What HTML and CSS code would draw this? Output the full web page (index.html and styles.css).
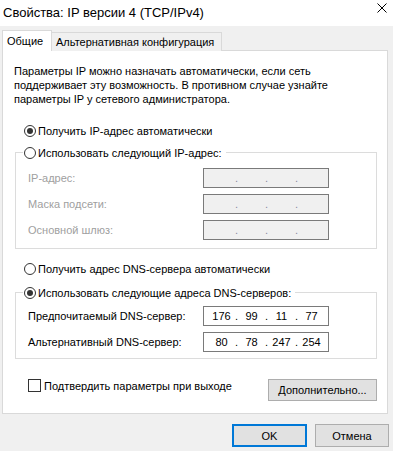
FILE: index.html
```html
<!DOCTYPE html>
<html lang="ru">
<head>
<meta charset="utf-8">
<title>Свойства: IP версии 4 (TCP/IPv4)</title>
<link rel="stylesheet" href="styles.css">
</head>
<body>
<div class="titlebar">
  <span class="title">Свойства: IP версии 4 (TCP/IPv4)</span>
  <svg class="close" width="10" height="10" viewBox="0 0 10 10"><path d="M0.5 0.5L9.5 9.5M9.5 0.5L0.5 9.5" stroke="#000" stroke-width="1"/></svg>
</div>
<div class="tabs">
  <div class="tab active">Общие</div>
  <div class="tab">Альтернативная конфигурация</div>
</div>
<div class="panel">
  <p class="intro">Параметры IP можно назначать автоматически, если сеть<br>поддерживает эту возможность. В противном случае узнайте<br>параметры IP у сетевого администратора.</p>

  <div class="opt r-auto"><span class="radio checked"></span><span>Получить IP-адрес автоматически</span></div>

  <div class="group g-ip">
    <div class="group-title"><span class="radio"></span><span>Использовать следующий IP-адрес:</span></div>
    <div class="fields f-ip">
      <span class="lbl disabled">IP-адрес:</span>
      <div class="ipbox disabled"><span class="seg"></span><span class="dot">.</span><span class="seg"></span><span class="dot">.</span><span class="seg"></span><span class="dot">.</span><span class="seg"></span></div>
      <span class="lbl disabled">Маска подсети:</span>
      <div class="ipbox disabled"><span class="seg"></span><span class="dot">.</span><span class="seg"></span><span class="dot">.</span><span class="seg"></span><span class="dot">.</span><span class="seg"></span></div>
      <span class="lbl disabled">Основной шлюз:</span>
      <div class="ipbox disabled"><span class="seg"></span><span class="dot">.</span><span class="seg"></span><span class="dot">.</span><span class="seg"></span><span class="dot">.</span><span class="seg"></span></div>
    </div>
  </div>

  <div class="opt r-dns"><span class="radio"></span><span>Получить адрес DNS-сервера автоматически</span></div>

  <div class="group g-dns">
    <div class="group-title"><span class="radio checked"></span><span>Использовать следующие адреса DNS-серверов:</span></div>
    <div class="fields f-dns">
      <span class="lbl">Предпочитаемый DNS-сервер:</span>
      <div class="ipbox"><span class="seg">176</span><span class="dot">.</span><span class="seg">99</span><span class="dot">.</span><span class="seg">11</span><span class="dot">.</span><span class="seg">77</span></div>
      <span class="lbl">Альтернативный DNS-сервер:</span>
      <div class="ipbox"><span class="seg">80</span><span class="dot">.</span><span class="seg">78</span><span class="dot">.</span><span class="seg">247</span><span class="dot">.</span><span class="seg">254</span></div>
    </div>
  </div>

  <div class="bottom-row">
    <div class="check-row"><span class="checkbox"></span><span>Подтвердить параметры при выходе</span></div>
    <button class="btn btn-adv">Дополнительно...</button>
  </div>
</div>
<div class="footer">
  <button class="btn btn-ok">OK</button>
  <button class="btn btn-cancel">Отмена</button>
</div>
</body>
</html>
```

FILE: styles.css
```css
* { box-sizing: border-box; }

html, body {
  margin: 0;
  padding: 0;
}

body {
  width: 393px;
  height: 451px;
  overflow: hidden;
  background: #f0f0f0;
  font-family: "Liberation Sans", Arial, sans-serif;
  font-size: 11px;
  color: #000;
}

.titlebar {
  height: 26px;
  background: #fff;
  display: flex;
  align-items: flex-start;
  justify-content: space-between;
}

.title {
  font-size: 13px;
  line-height: 16px;
  padding: 5px 0 0 3px;
}

.close {
  margin: 3px 6px 0 0;
}

.tabs {
  display: flex;
  align-items: flex-end;
  height: 25px;
  padding-left: 2px;
  margin-bottom: -1px;
}

.tab {
  height: 19px;
  border: 1px solid #d9d9d9;
  border-bottom: none;
  border-left: none;
  background: #f0f0f0;
  padding: 2px 0 0 4px;
  width: 170px;
  line-height: 14px;
}

.tab.active {
  height: 21px;
  width: 50px;
  border-left: 1px solid #d9d9d9;
  background: #fff;
  position: relative;
  z-index: 1;
  padding: 3px 0 0 4px;
}

.panel {
  margin-left: 2px;
  width: 386px;
  background: #fff;
  border: 1px solid #d9d9d9;
  padding-bottom: 12px;
}

.intro {
  margin: 13px 0 0 11px;
  line-height: 14px;
}

.opt {
  display: flex;
  align-items: center;
  height: 14px;
  padding-left: 21px;
  gap: 2px;
}

.r-auto { margin-top: 18px; }
.r-dns { margin-top: 13px; }

.radio {
  width: 12px;
  height: 12px;
  border: 1px solid #333;
  border-radius: 50%;
  background: #fff;
  flex: none;
  display: flex;
  align-items: center;
  justify-content: center;
}

.radio.checked::after {
  content: "";
  width: 6px;
  height: 6px;
  border-radius: 50%;
  background: #333;
}

.group {
  margin-left: 12px;
  width: 362px;
  border: 1px solid #dcdcdc;
}

.g-ip { margin-top: 14px; padding-bottom: 8px; }
.g-dns { margin-top: 16px; padding-bottom: 6px; }

.group-title {
  display: flex;
  align-items: center;
  gap: 2px;
  height: 14px;
  margin: -7px 0 0 7px;
  width: fit-content;
  padding: 0 4px 0 1px;
  background: #fff;
}

.fields {
  display: grid;
  grid-template-columns: 175px 126px;
  grid-auto-rows: 20px;
  row-gap: 6px;
  padding-left: 12px;
  align-items: center;
}

.f-ip { margin-top: 8px; }
.f-dns { margin-top: 6px; }

.lbl.disabled { color: #a0a0a0; }

.ipbox {
  height: 20px;
  border: 1px solid #7a7a7a;
  background: #fff;
  display: flex;
  align-items: center;
  padding-left: 4px;
}

.ipbox.disabled { background: #f0f0f0; }

.seg {
  width: 27px;
  text-align: center;
}

.dot {
  width: 3px;
  text-align: center;
}

.ipbox.disabled .dot { color: #8a8aa0; }

.bottom-row {
  display: flex;
  justify-content: space-between;
  align-items: flex-start;
  margin-top: 20px;
  padding-left: 25px;
  padding-right: 10px;
}

.check-row {
  display: flex;
  align-items: center;
  gap: 3px;
  height: 13px;
}

.checkbox {
  width: 13px;
  height: 13px;
  border: 1px solid #333;
  background: #fff;
}

.btn {
  font-family: "Liberation Sans", Arial, sans-serif;
  font-size: 11px;
  color: #000;
  background: #e1e1e1;
  border: 1px solid #adadad;
  padding: 0;
  margin: 0;
}

.btn-adv {
  width: 109px;
  height: 22px;
}

.footer {
  display: flex;
  justify-content: flex-end;
  gap: 8px;
  margin-top: 10px;
  padding-right: 4px;
}

.btn-ok {
  width: 75px;
  height: 23px;
  border: 2px solid #0078d7;
}

.btn-cancel {
  width: 74px;
  height: 23px;
}
```
